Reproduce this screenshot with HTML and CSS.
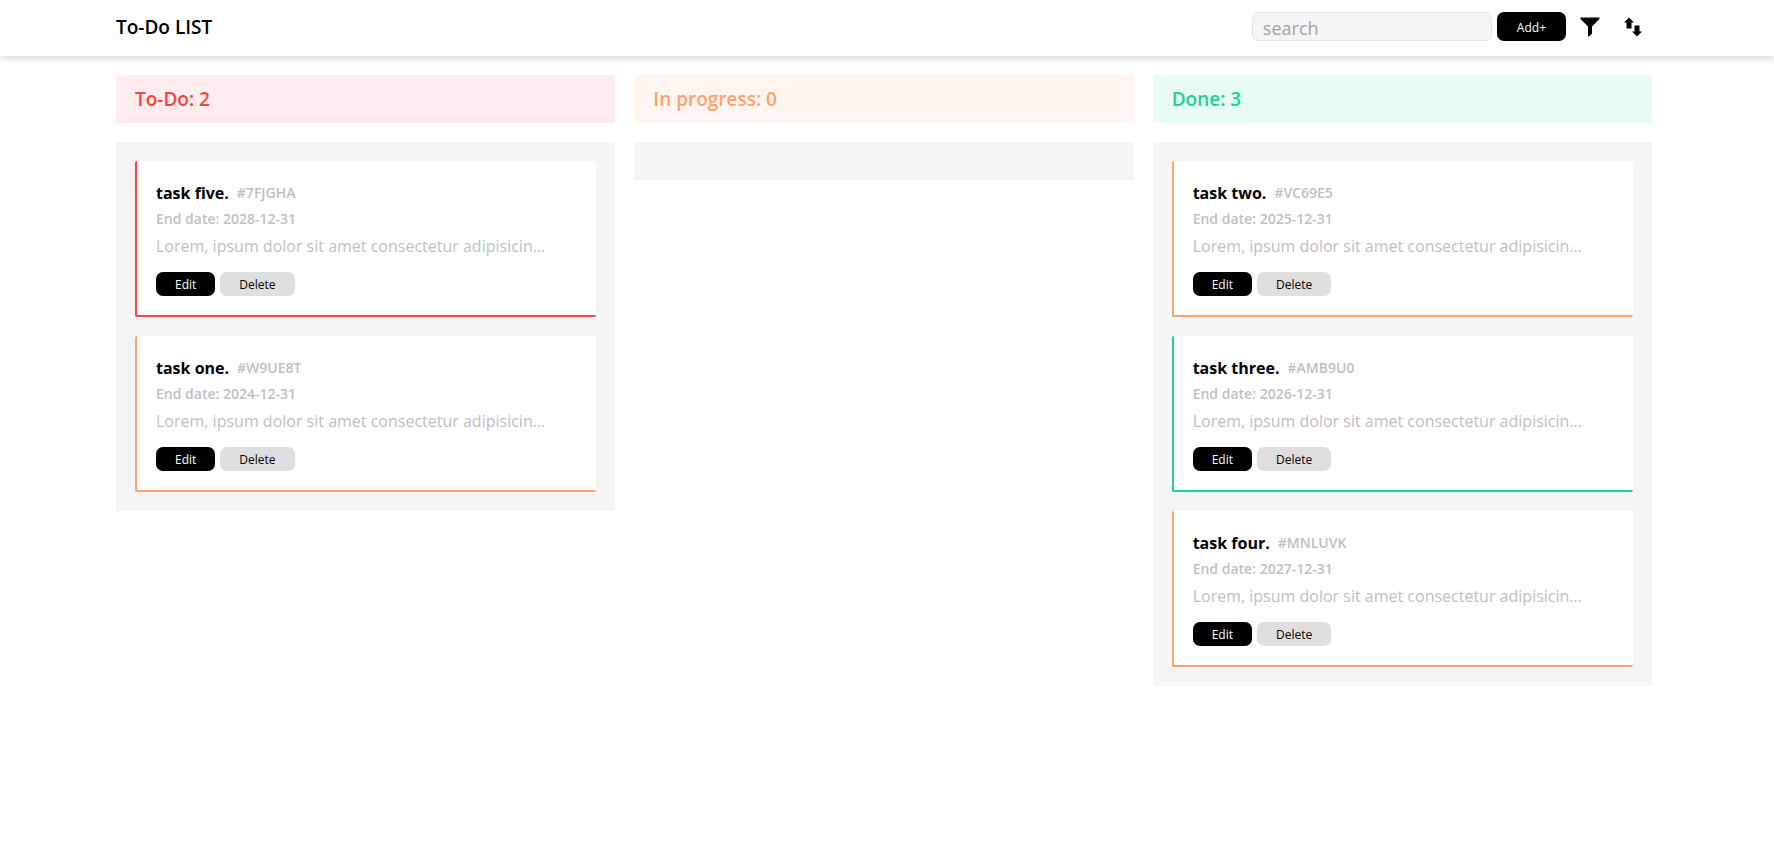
FILE: index.html
```html
<!DOCTYPE html>
<html lang="en">
<head>
<meta charset="utf-8">
<meta name="viewport" content="width=device-width, initial-scale=1">
<title>To-Do LIST</title>
<link rel="stylesheet" href="styles.css">
</head>
<body>
<header class="topbar">
  <div class="container topbar-inner">
    <h1 class="brand">To-Do LIST</h1>
    <div class="tools">
      <input class="search" type="search" placeholder="search" aria-label="search">
      <button class="btn btn-dark btn-add" type="button">Add+</button>
      <button class="icon-btn" type="button" aria-label="Filter">
        <svg viewBox="0 0 24 24" aria-hidden="true"><path d="M2.500 2.500h19v1.500L14 11.500v7L11 21.500h-1v-10L2.500 4z"/></svg>
      </button>
      <button class="icon-btn" type="button" aria-label="Sort">
        <svg viewBox="0 0 24 24" aria-hidden="true"><path d="M8 2.500l5 5h-2.500v6h-5v-6H3zM16 21.500l-5-5h2.500v-6h5v6H21z"/></svg>
      </button>
    </div>
  </div>
</header>
<main class="container board">
  <section class="column">
    <h2 class="column-title is-todo">To-Do: 2</h2>
    <div class="column-body">
      <article class="card priority-high">
        <div class="card-head"><h3 class="card-title">task five.</h3><span class="card-id">#7FJGHA</span></div>
        <p class="card-date">End date: 2028-12-31</p>
        <p class="card-text">Lorem, ipsum dolor sit amet consectetur adipisicin...</p>
        <div class="card-actions"><button class="btn btn-dark" type="button">Edit</button><button class="btn btn-light" type="button">Delete</button></div>
      </article>
      <article class="card priority-medium">
        <div class="card-head"><h3 class="card-title">task one.</h3><span class="card-id">#W9UE8T</span></div>
        <p class="card-date">End date: 2024-12-31</p>
        <p class="card-text">Lorem, ipsum dolor sit amet consectetur adipisicin...</p>
        <div class="card-actions"><button class="btn btn-dark" type="button">Edit</button><button class="btn btn-light" type="button">Delete</button></div>
      </article>
    </div>
  </section>
  <section class="column">
    <h2 class="column-title is-progress">In progress: 0</h2>
    <div class="column-body"></div>
  </section>
  <section class="column">
    <h2 class="column-title is-done">Done: 3</h2>
    <div class="column-body">
      <article class="card priority-medium">
        <div class="card-head"><h3 class="card-title">task two.</h3><span class="card-id">#VC69E5</span></div>
        <p class="card-date">End date: 2025-12-31</p>
        <p class="card-text">Lorem, ipsum dolor sit amet consectetur adipisicin...</p>
        <div class="card-actions"><button class="btn btn-dark" type="button">Edit</button><button class="btn btn-light" type="button">Delete</button></div>
      </article>
      <article class="card priority-low">
        <div class="card-head"><h3 class="card-title">task three.</h3><span class="card-id">#AMB9U0</span></div>
        <p class="card-date">End date: 2026-12-31</p>
        <p class="card-text">Lorem, ipsum dolor sit amet consectetur adipisicin...</p>
        <div class="card-actions"><button class="btn btn-dark" type="button">Edit</button><button class="btn btn-light" type="button">Delete</button></div>
      </article>
      <article class="card priority-medium">
        <div class="card-head"><h3 class="card-title">task four.</h3><span class="card-id">#MNLUVK</span></div>
        <p class="card-date">End date: 2027-12-31</p>
        <p class="card-text">Lorem, ipsum dolor sit amet consectetur adipisicin...</p>
        <div class="card-actions"><button class="btn btn-dark" type="button">Edit</button><button class="btn btn-light" type="button">Delete</button></div>
      </article>
    </div>
  </section>
</main>
</body>
</html>
```
FILE: styles.css
```css
:root {
  --red: #ff4040;
  --orange: #ffa270;
  --green: #20d090;
  --grey: #f5f5f5;
  --muted: #bfbfbf;
  --space: 19px;
}
* { box-sizing: border-box; margin: 0; }
body {
  background: #fff;
  color: #000;
  font-family: "Segoe UI", "Open Sans", "Noto Sans", sans-serif;
  padding-right: 6px;
}
.container { max-width: 1536px; margin: 0 auto; }
.topbar {
  margin-right: -6px;
  padding-right: 6px;
  background: #fff;
  box-shadow: 0 0 10px rgba(0, 0, 0, 0.25);
}
.topbar-inner {
  display: flex;
  align-items: center;
  justify-content: space-between;
  padding: 12px 0 15px;
}
.brand { font-size: 19px; line-height: 24px; font-weight: 600; }
.tools { display: flex; align-items: center; gap: 5px; }
.search {
  width: 240px;
  height: 29px;
  padding: 3px 10px 0;
  border: 1px solid #e5e5e5;
  border-radius: 6px;
  background: var(--grey);
  font: 18px/24px "Segoe UI", "Open Sans", "Noto Sans", sans-serif;
}
.search::placeholder { color: #9ca3af; opacity: 1; }
.btn {
  height: 24px;
  padding: 2px 19px 0;
  border: 0;
  border-radius: 7px;
  font: 12px/22px "Segoe UI", "Open Sans", "Noto Sans", sans-serif;
}
.btn-dark { background: #000; color: #fff; }
.btn-light { background: #dfdfdf; color: #000; }
.btn-add { height: 29px; padding: 2px 20px 0; }
.icon-btn {
  display: flex;
  padding: 0 7px;
  border: 0;
  background: none;
}
.icon-btn svg { width: 24px; height: 24px; }
.board {
  display: grid;
  grid-template-columns: repeat(3, minmax(0, 1fr));
  align-items: start;
  gap: var(--space);
  padding-top: var(--space);
}
.column { display: grid; gap: var(--space); }
.column-title {
  padding: 12px var(--space);
  font-size: 19px;
  line-height: 24px;
  font-weight: 600;
}
.is-todo { color: var(--red); background: #ffecec; }
.is-progress { color: var(--orange); background: #fff6f1; }
.is-done { color: var(--green); background: #e8fbf5; }
.column-body {
  display: grid;
  gap: var(--space);
  padding: var(--space);
  background: var(--grey);
}
.card {
  padding: var(--space);
  border-left: 2px solid;
  border-bottom: 2px solid;
  border-radius: 2px;
  background: #fff;
}
.priority-high { border-color: var(--red); }
.priority-medium { border-color: var(--orange); }
.priority-low { border-color: var(--green); }
.card-head { display: flex; align-items: center; gap: 8px; }
.card-title { font-size: 16px; line-height: 26px; font-weight: 700; color: #000; }
.card-id, .card-date { font-size: 14px; line-height: 26px; font-weight: 600; color: var(--muted); }
.card-text { font-size: 16px; line-height: 28px; color: var(--muted); white-space: nowrap; overflow: hidden; text-overflow: ellipsis; }
.card-actions { display: flex; gap: 5px; padding-top: 12px; }
```
